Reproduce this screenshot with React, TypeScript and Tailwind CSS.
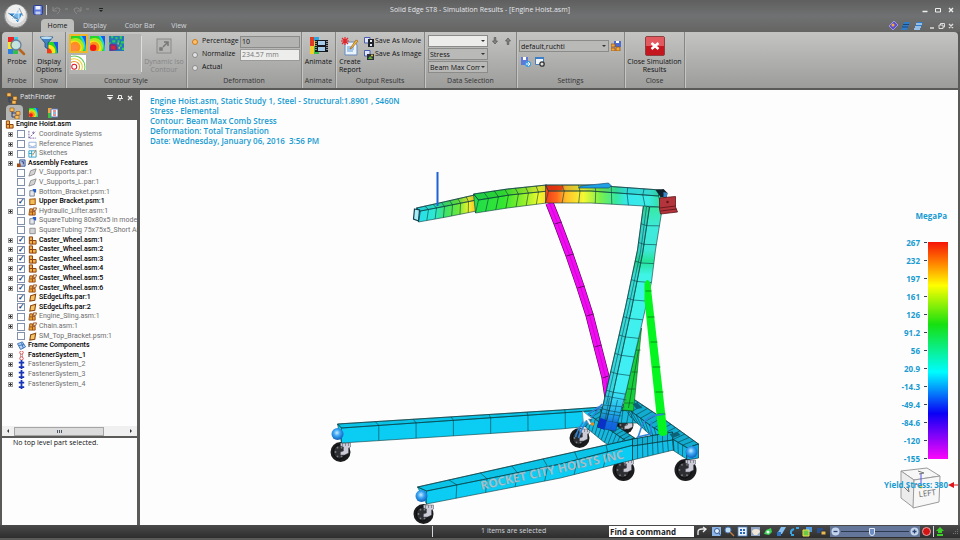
import { useState, type ReactNode } from "react";
import clsx from "clsx";

type Point = [number, number];

const toPoints = (pts: Point[]) => pts.map((p) => p.join(",")).join(" ");

// Position at t (0..1) along a polyline
function along(line: Point[], t: number): Point {
  const lens = line.slice(1).map((p, i) => Math.hypot(p[0] - line[i][0], p[1] - line[i][1]));
  let left = t * lens.reduce((a, b) => a + b, 0);
  for (let i = 0; i < lens.length; i++) {
    if (left <= lens[i] || i === lens.length - 1) {
      const k = left / lens[i];
      return [
        line[i][0] + (line[i + 1][0] - line[i][0]) * k,
        line[i][1] + (line[i + 1][1] - line[i][1]) * k,
      ];
    }
    left -= lens[i];
  }
  return line[0];
}

interface BeamProps {
  top: Point[];
  ridge: Point[];
  bottom: Point[];
  fill: string;
  count: number;
  shade?: number;
}

// One meshed beam: two visible faces split by a ridge, with element lines
function Beam({ top, ridge, bottom, fill, count, shade = 0.1 }: BeamProps) {
  const steps = Array.from({ length: count + 1 }, (_, i) => i / count);
  return (
    <g stroke="#0b3b40" strokeWidth="0.6" strokeLinejoin="round">
      <polygon points={toPoints([...top, ...[...bottom].reverse()])} fill={fill} />
      <polygon points={toPoints([...top, ...[...ridge].reverse()])} fill="#003a30" fillOpacity={shade} />
      <polyline points={toPoints(ridge)} fill="none" />
      {steps.map((t) => (
        <polyline key={t} points={toPoints([along(top, t), along(ridge, t), along(bottom, t)])} fill="none" />
      ))}
    </g>
  );
}

function Caster({ x, y, r = 10 }: { x: number; y: number; r?: number }) {
  return (
    <g>
      <ellipse cx={x} cy={y} rx={r} ry={r} fill="#1b1c1e" />
      <ellipse cx={x - 1} cy={y} rx={r - 4} ry={r - 3} fill="#2c2e31" stroke="#0c0c0d" />
      {[0, 60, 120, 180, 240, 300].map((a) => (
        <circle
          key={a}
          cx={x - 1 + Math.cos((a * Math.PI) / 180) * (r - 6)}
          cy={y + Math.sin((a * Math.PI) / 180) * (r - 5)}
          r="0.9"
          fill="#7b7e83"
        />
      ))}
      <path
        d={`M${x} ${y - r + 1}h10v4l-2 1v5l-4 2l-4 0v-3l3 -1v-4l-3 -1z`}
        fill="#cbccd8"
        stroke="#55565f"
        strokeWidth="0.5"
      />
      <path d={`M${x + 2} ${y - r + 1}v3M${x + 5} ${y - r + 1}v3M${x + 8} ${y - r + 1}v3`} stroke="#6e707c" strokeWidth="0.7" />
    </g>
  );
}

const ramPath = "M549 203L557 223L569 255L580 287L589 315L597 346L605 377L608 397";

function HoistScene() {
  return (
    <svg
      viewBox="140 90 817 435"
      preserveAspectRatio="xMidYMax meet"
      className="absolute inset-0 h-full w-full"
      role="img"
      aria-label="Engine hoist stress plot"
    >
      <defs>
        <linearGradient id="tip" gradientUnits="userSpaceOnUse" x1="414" y1="0" x2="476" y2="0">
          <stop offset="0" stopColor="#27dcf5" />
          <stop offset="0.32" stopColor="#2de8d0" />
          <stop offset="0.5" stopColor="#3ee26a" />
          <stop offset="0.7" stopColor="#68e83c" />
          <stop offset="0.88" stopColor="#f1f32f" />
          <stop offset="1" stopColor="#ffb52a" />
        </linearGradient>
        <linearGradient id="sleeve" gradientUnits="userSpaceOnUse" x1="474" y1="0" x2="547" y2="0">
          <stop offset="0" stopColor="#1fdc4c" />
          <stop offset="0.4" stopColor="#35e62f" />
          <stop offset="0.7" stopColor="#9cf02c" />
          <stop offset="0.88" stopColor="#eef92e" />
          <stop offset="1" stopColor="#ffd829" />
        </linearGradient>
        <linearGradient id="boom" gradientUnits="userSpaceOnUse" x1="546" y1="0" x2="662" y2="0">
          <stop offset="0" stopColor="#f0401c" />
          <stop offset="0.09" stopColor="#ff6b1c" />
          <stop offset="0.17" stopColor="#ffc02a" />
          <stop offset="0.32" stopColor="#f4f934" />
          <stop offset="0.46" stopColor="#7cf04a" />
          <stop offset="0.6" stopColor="#37e8a0" />
          <stop offset="0.7" stopColor="#35e8ef" />
          <stop offset="0.88" stopColor="#3cebe4" />
          <stop offset="1" stopColor="#30de92" />
        </linearGradient>
        <linearGradient id="post" gradientUnits="userSpaceOnUse" x1="0" y1="205" x2="0" y2="430">
          <stop offset="0" stopColor="#35ea9c" />
          <stop offset="0.1" stopColor="#3fe9dc" />
          <stop offset="0.2" stopColor="#3ee9d8" />
          <stop offset="0.25" stopColor="#25e396" />
          <stop offset="0.31" stopColor="#3ff3e6" />
          <stop offset="0.82" stopColor="#40edf7" />
          <stop offset="0.92" stopColor="#24b4ee" />
          <stop offset="1" stopColor="#0b46d2" />
        </linearGradient>
        <radialGradient id="cap" cx="0.45" cy="0.4" r="0.6">
          <stop offset="0" stopColor="#c8ecff" />
          <stop offset="0.45" stopColor="#3ba6f2" />
          <stop offset="1" stopColor="#0f60bd" />
        </radialGradient>
      </defs>

      {/* Rear casters */}
      <Caster x={624} y={425} r={9} />
      <Caster x={579} y={438} />
      <Caster x={340} y={452} />

      {/* Base frame */}
      <Beam
        top={[[337, 424], [560, 410], [602, 407]]}
        ridge={[[341, 428], [560, 413], [602, 410]]}
        bottom={[[341, 443], [560, 429], [602, 425]]}
        fill="#0bcdf3"
        count={7}
        shade={0.06}
      />
      <Beam
        top={[[610, 408], [641, 407]]}
        ridge={[[610, 411], [641, 410]]}
        bottom={[[610, 423], [637, 423]]}
        fill="#18b9df"
        count={5}
      />
      <Beam
        top={[[633, 399], [666, 421], [698, 444]]}
        ridge={[[622, 405], [652, 427], [687, 448]]}
        bottom={[[631, 418], [652, 437], [686, 459]]}
        fill="#14b9e2"
        count={14}
      />
      <polygon points="687,448 698,444 698,458 686,460" fill="#0ba9e0" stroke="#0b3b40" strokeWidth="0.7" />
      <Beam
        top={[[598, 408], [615, 425], [637, 440]]}
        ridge={[[588, 414], [608, 429], [630, 444]]}
        bottom={[[585, 427], [602, 441], [624, 456]]}
        fill="#16b8e0"
        count={12}
      />
      <Caster x={623} y={470} r={11} />
      <Caster x={685} y={470} r={11} />
      <Beam
        top={[[417, 487], [560, 455], [637, 438]]}
        ridge={[[426, 491], [560, 464], [637, 444]]}
        bottom={[[426, 504], [560, 478], [632, 460]]}
        fill="#0bcdf3"
        count={7}
        shade={0.06}
      />
      <Beam
        top={[[632, 439], [672, 432]]}
        ridge={[[632, 446], [672, 440]]}
        bottom={[[632, 460], [673, 450]]}
        fill="#12bfe8"
        count={8}
      />
      <circle cx="337" cy="434" r="6" fill="url(#cap)" />
      <circle cx="421" cy="496" r="6" fill="url(#cap)" />
      <circle cx="691" cy="452" r="6" fill="url(#cap)" />
      <Caster x={423} y={514} />
      <text
        transform="translate(481 490) rotate(-12.5)"
        fontFamily="'Open Sans', sans-serif"
        fontSize="12"
        fontWeight="700"
        fill="#a9c3cd"
        stroke="#5e8b99"
        strokeWidth="0.2"
      >
        ROCKET CITY HOISTS INC
      </text>

      {/* Rear brace */}
      <polygon points="641,328 633,411 622,410 628,380" fill="#17cf3e" stroke="#0b5b20" strokeWidth="0.6" />
      <path d="M638 350L628 408M634 350h6M631 372h6M627 389h8M624 403h9" stroke="#0b5b20" strokeWidth="0.7" fill="none" />

      {/* Ram */}
      <path d={ramPath} stroke="#4c0a4e" strokeWidth="8.400" strokeLinejoin="round" fill="none" />
      <path d={ramPath} stroke="#f20af2" strokeWidth="7.200" strokeLinejoin="round" fill="none" />
      <path d={ramPath} stroke="#b00ab6" strokeWidth="0.6" fill="none" />
      <path
        d="M554 224l7 -2M566 256l7 -2M577 288l7 -2M586 316l7 -2M594 347l7 -2M602 378l6 -2"
        stroke="#4c0a4e"
        strokeWidth="0.8"
      />

      {/* Post */}
      <Beam
        top={[[643, 205], [637, 250], [625, 307], [603, 403], [597, 427]]}
        ridge={[[649, 207], [642, 254], [631, 309], [610, 405], [604, 429]]}
        bottom={[[662, 207], [655, 250], [651, 282], [640, 330], [626, 390], [615, 431]]}
        fill="url(#post)"
        count={12}
        shade={0.12}
      />
      <path
        d="M646 207L640 252L628 308L606 404M605 396L626 400M603 405l21 2M601 413l20 3M599 420l20 3M609 398l-6 30M617 400l-7 30"
        stroke="#0b4b60"
        strokeWidth="0.6"
        fill="none"
      />
      <path d="M597 427L600 418L606 420L604 430Z" fill="#0b30c8" />
      <path d="M606 421l11 2l-2 8l-11 -2z" fill="#1169e6" fillOpacity="0.7" />

      {/* Front brace */}
      <path d="M644 284Q647 276 650 284L667 434Q662 438 658 434L644 300Z" fill="#04f51f" />
      <path d="M645 291h6M647 317h7M650 342h7M652 367h8M655 392h8M657 414h8" stroke="#067a16" strokeWidth="0.8" />

      {/* Lifting hooks */}
      <g fill="none" stroke="#2f86da" strokeWidth="1.600">
        <path d="M575 437C577 428 582 424 586 417S598 409 602 404" />
        <path d="M578 438C582 422 592 418 600 407" />
        <path d="M637 438C641 430 640 423 648 418S658 416 663 414" />
        <path d="M637 437L650 434L651 421" />
      </g>
      <path d="M632 404l5 -1l5 5l-6 1zM669 434l8 -2l3 3l-8 3z" fill="#0c6276" />

      {/* Boom */}
      <Beam
        top={[[416, 208], [443, 202], [474, 195]]}
        ridge={[[420, 211], [446, 206], [476, 200]]}
        bottom={[[418, 222], [446, 217], [476, 211]]}
        fill="url(#tip)"
        count={7}
      />
      <path d="M414 209l5 1l-1 11l-5 -2z" fill="#a9ecf5" stroke="#123f4d" strokeWidth="1.200" />
      <Beam
        top={[[473, 194], [507, 189], [546, 185]]}
        ridge={[[478, 200], [509, 195], [548, 191]]}
        bottom={[[475, 213], [507, 208], [546, 203]]}
        fill="url(#sleeve)"
        count={7}
      />
      <Beam
        top={[[545, 185], [590, 185], [660, 190]]}
        ridge={[[548, 191], [590, 191], [658, 196]]}
        bottom={[[545, 203], [590, 203], [661, 207]]}
        fill="url(#boom)"
        count={7}
      />
      <polygon points="580,186 608,183 611,186 608,188 578,188" fill="#1f9fe4" stroke="#0b3b60" strokeWidth="0.6" />
      <path d="M546 186L563 186L562 190L549 190Z" fill="#e0240c" fillOpacity="0.7" />
      <path d="M655 190l8 -1l4 4l-1 5l-6 -1z" fill="#12222c" />
      <path d="M663 192l4 1l-1 5l-3 -1z" fill="#3787c8" />
      <path d="M659 198L675 196.500L675 207L677 212L660 214L659 209Z" fill="#b3343b" stroke="#5b1418" strokeWidth="0.8" />
      <path d="M659 208L675 206M660 211l16 -2" stroke="#5b1418" strokeWidth="0.8" />
      <circle cx="667" cy="202" r="1.2" fill="#5b1418" />
      <rect x="436" y="172" width="2" height="34" fill="#1f63d6" />

      {/* Pointer */}
      <path d="M582 411l1 12l3 -3l3 5l2 -1l-3 -5h4z" fill="#fff" stroke="#6e7c86" strokeWidth="0.5" />
      <circle cx="592" cy="424" r="1.8" fill="#e88a1c" />
    </svg>
  );
}

const stressLevels = [
  "267", "232", "197", "161", "126", "91.2", "56", "20.9", "-14.3", "-49.4", "-84.6", "-120", "-155",
];

function StressLegend() {
  return (
    <div className="relative flex w-20 flex-col text-[8px] leading-3 font-bold text-[#179bd1]">
      <div className="pr-[11px] text-right">MegaPa</div>
      <div className="mt-5 flex justify-end gap-px pr-[10px]">
        <ul className="-my-1 flex flex-col justify-between text-right">
          {stressLevels.map((level) => (
            <li key={level} className="flex h-[9px] items-center justify-end gap-1 leading-[9px]">
              {level}
              <span className="h-px w-[3px] bg-gray-700" />
            </li>
          ))}
        </ul>
        <div className="h-[217px] w-5 bg-[linear-gradient(#f51408,#ff7a00_9%,#ffff00_20%,#16e010_38%,#00fcff_60%,#0a00f5_79%,#fb06fb)]" />
      </div>
      <svg viewBox="0 0 46 46" className="absolute right-[15px] bottom-[-18px] w-[46px]" aria-hidden="true">
        <path d="M4 8L30 5L43 13L17 17Z" fill="#f7f7f7" stroke="#9b9b9b" />
        <path d="M4 8L17 17V45L4 35Z" fill="#ececec" stroke="#9b9b9b" />
        <path d="M17 17L43 13L42 39L16 45Z" fill="#f7f7f7" stroke="#9b9b9b" />
        <path d="M24 10V24" stroke="#5555ee" />
        <path d="M19 21L24 24" stroke="#e55" />
        <circle cx="24" cy="24" r="1.500" fill="#e8d030" />
        <path d="M7 24l5 5l-1 -6M21 8l6 2l-5 1" stroke="#777" fill="none" />
        <text x="22" y="34" transform="rotate(-7 22 34)" fontSize="8" fontWeight="400" fill="#666">
          LEFT
        </text>
      </svg>
      <div className="relative mt-5 flex items-center justify-end whitespace-nowrap">
        Yield Stress: 380
        <svg viewBox="0 0 10 6" className="h-1.5 w-2.5 shrink-0">
          <path d="M0 3L6 0V2.500H10V3.500H6V6Z" fill="#e0141a" />
        </svg>
      </div>
    </div>
  );
}

type Glyph =
  | "axes"
  | "plane"
  | "sketch"
  | "features"
  | "ghost"
  | "linked"
  | "part"
  | "partAlt"
  | "grayPart"
  | "asm"
  | "asmAlt"
  | "frame"
  | "bolt"
  | "boltBlue";

function TreeGlyph({ kind }: { kind: Glyph }) {
  return (
    <svg viewBox="0 0 10 10" className="h-[9px] w-[9px] shrink-0" aria-hidden="true">
      {kind === "axes" && (
        <g stroke="#6b4a94" strokeWidth="0.9" fill="none">
          <path d="M1 1V9H9M1 9L8 2" strokeDasharray="2 1" />
          <circle cx="6" cy="3" r="0.8" />
        </g>
      )}
      {kind === "plane" && <path d="M1 2.500H9V8.500H1ZM1 6Q5 9 9 6" fill="#fff" stroke="#8eafd8" />}
      {kind === "sketch" && (
        <g fill="none" stroke="#2b9fc4">
          <path d="M1 2H9V9H1ZM4 2V9M1 5H5" />
          <path d="M5 7L9 1" stroke="#ad7a3a" />
        </g>
      )}
      {kind === "features" && (
        <g>
          <path d="M3 1H9V8H3Z" fill="#b9c8e8" stroke="#30508f" />
          <path d="M0 5H4V9H0Z" fill="#a34b10" />
          <path d="M5 3H7V6" stroke="#1d2d66" fill="none" />
        </g>
      )}
      {(kind === "ghost" || kind === "grayPart") && (
        <path d={kind === "ghost" ? "M3 3L9 1L7 7L1 9Z" : "M2 2.500H8V8.500H2Z"} fill="#d3d3d3" stroke="#8a8a8a" />
      )}
      {kind === "linked" && (
        <g>
          <path d="M2 3H7V9H2Z" fill="#e3e6ea" stroke="#74808e" />
          <path d="M5 1H9V5Q6 5 5 1Z" fill="#2b5fc6" />
        </g>
      )}
      {kind === "part" && <path d="M2 2.500L8 2V8L2 8.500Z" fill="#f3bd55" stroke="#a55a13" strokeWidth="1.200" />}
      {kind === "partAlt" && <path d="M3 3L8.500 1.500L7.500 8L2 9Z" fill="#f5c566" stroke="#8a4710" strokeWidth="1.200" />}
      {kind === "asm" && (
        <g fill="#f0b04a" stroke="#8f4310" strokeWidth="1.100">
          <path d="M1.500 1H5V5H9V9H1.500Z" />
          <path d="M1.500 5H5V9" fill="none" />
        </g>
      )}
      {kind === "asmAlt" && (
        <g fill="#e8a33b" stroke="#8f4310" strokeWidth="0.9">
          <path d="M2 2H5V5H8V9H1Z" />
          <path d="M2 5.500H5V9" fill="none" />
          <path d="M6 1L9.500 1L8.500 4L6 4Z" fill="#f7e3c0" />
        </g>
      )}
      {kind === "frame" && (
        <g fill="#b5d3f5" stroke="#2a62ad" strokeWidth="0.9">
          <path d="M0.500 3L6 1L9.500 6.500L4 9.500Z" />
          <path d="M2 5L8 4M5 2L7 8" fill="none" />
        </g>
      )}
      {kind === "bolt" && (
        <g fill="#fff" stroke="#d04747">
          <path d="M4 2H6V8H4Z" stroke="#9b6b6b" strokeWidth="0.700" />
          <circle cx="5" cy="1.700" r="1.900" />
          <circle cx="5" cy="8.300" r="1.900" />
        </g>
      )}
      {kind === "boltBlue" && <path d="M4 0H6V10H4ZM2 2H8V4H2ZM2 7H8V9H2Z" fill="#1936b8" />}
    </svg>
  );
}

interface TreeNode {
  label: string;
  glyph: Glyph;
  check?: boolean;
  expand?: boolean;
  dim?: boolean;
}

const treeNodes: TreeNode[] = [
  { label: "Coordinate Systems", glyph: "axes", check: false, expand: true, dim: true },
  { label: "Reference Planes", glyph: "plane", check: false, expand: true, dim: true },
  { label: "Sketches", glyph: "sketch", check: false, expand: true, dim: true },
  { label: "Assembly Features", glyph: "features", expand: true },
  { label: "V_Supports.par:1", glyph: "ghost", check: false, dim: true },
  { label: "V_Supports_L.par:1", glyph: "ghost", check: false, dim: true },
  { label: "Bottom_Bracket.psm:1", glyph: "linked", check: false, dim: true },
  { label: "Upper Bracket.psm:1", glyph: "part", check: true },
  { label: "Hydraulic_Lifter.asm:1", glyph: "asmAlt", check: false, expand: true, dim: true },
  { label: "SquareTubing 80x80x5 in model", glyph: "linked", check: false, dim: true },
  { label: "SquareTubing 75x75x5_Short Ar", glyph: "grayPart", check: false, dim: true },
  { label: "Caster_Wheel.asm:1", glyph: "asm", check: true, expand: true },
  { label: "Caster_Wheel.asm:2", glyph: "asm", check: true, expand: true },
  { label: "Caster_Wheel.asm:3", glyph: "asm", check: true, expand: true },
  { label: "Caster_Wheel.asm:4", glyph: "asm", check: true, expand: true },
  { label: "Caster_Wheel.asm:5", glyph: "asmAlt", check: true, expand: true },
  { label: "Caster_Wheel.asm:6", glyph: "asmAlt", check: true, expand: true },
  { label: "SEdgeLifts.par:1", glyph: "partAlt", check: true },
  { label: "SEdgeLifts.par:2", glyph: "partAlt", check: true },
  { label: "Engine_Sling.asm:1", glyph: "asmAlt", check: false, expand: true, dim: true },
  { label: "Chain.asm:1", glyph: "asmAlt", check: false, expand: true, dim: true },
  { label: "SM_Top_Bracket.psm:1", glyph: "partAlt", check: false, dim: true },
  { label: "Frame Components", glyph: "frame", expand: true },
  { label: "FastenerSystem_1", glyph: "bolt", expand: true },
  { label: "FastenerSystem_2", glyph: "boltBlue", expand: true, dim: true },
  { label: "FastenerSystem_3", glyph: "boltBlue", expand: true, dim: true },
  { label: "FastenerSystem_4", glyph: "boltBlue", expand: true, dim: true },
];

function TreeRow({ node }: { node: TreeNode }) {
  return (
    <li
      className={clsx(
        "flex items-center pl-[6px] whitespace-nowrap",
        node.dim ? "text-[#6f6f6f]" : "font-medium text-black",
      )}
    >
      {node.expand ? (
        <button
          aria-label={`Expand ${node.label}`}
          className="mr-1 flex h-[5px] w-[5px] shrink-0 items-center justify-center border border-[#9a9a9a] bg-[#ececec]"
        >
          <svg viewBox="0 0 3 3" className="h-[3px] w-[3px] shrink-0">
            <path d="M0 1H1V0H2V1H3V2H2V3H1V2H0Z" fill="#333" />
          </svg>
        </button>
      ) : (
        <span className="mr-1 w-[5px] shrink-0" />
      )}
      <label className="flex items-center gap-[2px]">
        {node.check !== undefined && (
          <input
            type="checkbox"
            defaultChecked={node.check}
            className="mr-px flex h-2 w-2 shrink-0 appearance-none items-center justify-center border border-[#8191ab] bg-white text-[8px] leading-none font-bold text-[#1d3f7d] checked:after:content-['✓']"
          />
        )}
        <TreeGlyph kind={node.glyph} />
        {node.label}
      </label>
    </li>
  );
}

function AsmLogo({ className }: { className: string }) {
  return (
    <svg viewBox="0 0 12 12" className={className} aria-hidden="true">
      <path d="M3 4V10H8M3 6H8" stroke="#2f3f66" fill="none" />
      <path d="M1 1H5V4.500H1ZM7 4.500H11V8H7ZM6 8.500H10V12H6Z" fill="#f7bd5a" stroke="#8f5312" strokeWidth="0.6" />
    </svg>
  );
}

function HeatIcon({ className, center = "#f01818" }: { className: string; center?: string }) {
  return (
    <svg viewBox="0 0 14 14" className={className} aria-hidden="true">
      <rect width="14" height="14" fill="#1857e8" />
      <path d="M0 0H10Q14 5 14 14H0Z" fill="#1cd6e8" />
      <path d="M0 0H8Q12 6 13 14H0Z" fill="#25d528" />
      <path d="M0 3A8 8 0 0 1 11 14H0Z" fill="#a8ea22" />
      <path d="M0 5A7 7 0 0 1 9.500 14H0Z" fill="#fbe21c" />
      <path d="M0 7A5 5 0 0 1 7.500 14H0Z" fill="#ff8f1c" />
      <circle cx="3" cy="11" r="3" fill={center} />
    </svg>
  );
}

function PathFinder() {
  return (
    <aside className="flex w-[135px] shrink-0 flex-col">
      <div className="flex h-[15px] shrink-0 items-center gap-[2px] px-1 text-[7px] text-gray-200">
        <AsmLogo className="h-3 w-3" />
        <h2 className="flex-1">PathFinder</h2>
        <div className="flex items-center gap-1">
          <button aria-label="Options">
            <svg viewBox="0 0 6 6" className="h-[6px] w-[6px]">
              <path d="M0 0H6V1H0ZM0 2H6L3 5Z" fill="#eee" />
            </svg>
          </button>
          <button aria-label="Pin">
            <svg viewBox="0 0 6 6" className="h-[6px] w-[6px]">
              <path d="M1.500 0.500H4.500V3.500H1.500ZM0 3.500H6M3 3.500V6" fill="none" stroke="#eee" />
            </svg>
          </button>
          <button aria-label="Close panel">
            <svg viewBox="0 0 6 6" className="h-[6px] w-[6px]">
              <path d="M1 1L5 5M5 1L1 5" stroke="#eee" strokeWidth="1.200" />
            </svg>
          </button>
        </div>
      </div>
      <div className="flex h-[15px] shrink-0 items-center px-1">
        <button aria-label="Assembly" className="flex h-full w-[17px] items-center justify-center rounded-t-sm bg-[#b5b5b4]">
          <AsmLogo className="h-3 w-3" />
        </button>
        <button aria-label="Results" className="flex w-5 justify-center">
          <HeatIcon className="h-[9px] w-[9px]" />
        </button>
        <button aria-label="Report" className="flex w-5 justify-center">
          <svg viewBox="0 0 10 10" className="h-[10px] w-[10px]">
            <path d="M0 0H4V10H0Z" fill="#f2a33c" />
            <path d="M0 5H4V10H0Z" fill="#3bc03f" />
            <path d="M3 1H10V9H3Z" fill="#fff" stroke="#5c74b8" />
            <path d="M5 3H8M5 7H8" stroke="#c22" />
            <path d="M5 5H8" stroke="#26a" />
          </svg>
        </button>
      </div>
      <div className="min-h-0 flex-1 overflow-hidden bg-[#fdfdfd] font-['Roboto','Open_Sans',sans-serif] text-[7px] leading-[9px]">
        <ul className="grid h-[269px] auto-rows-fr">
          <li className="flex items-center gap-[2px] pl-[3px] font-medium whitespace-nowrap text-black">
            <TreeGlyph kind="asm" />
            Engine Hoist.asm
          </li>
          {treeNodes.map((node) => (
            <TreeRow key={node.label} node={node} />
          ))}
        </ul>
      </div>
      <div className="flex h-[10px] shrink-0 items-center bg-[#f0f0f0] px-1">
        <svg viewBox="0 0 4 4" className="h-1 w-1">
          <path d="M3 0L1 2L3 4Z" fill="#333" />
        </svg>
        <div className="ml-1 flex h-[9px] w-[90px] items-center justify-center gap-px border border-[#a5a5a5] bg-[#dcdcdc]">
          <span className="h-[3px] w-px bg-gray-600" />
          <span className="h-[3px] w-px bg-gray-600" />
          <span className="h-[3px] w-px bg-gray-600" />
        </div>
        <svg viewBox="0 0 4 4" className="ml-auto h-1 w-1">
          <path d="M1 0L3 2L1 4Z" fill="#333" />
        </svg>
      </div>
      <p className="mt-[2px] h-[87px] shrink-0 bg-[#fdfdfd] px-[11px] text-[7px] leading-[9px] text-[#111]">
        No top level part selected.
      </p>
    </aside>
  );
}

function RibbonGroup({ title, className, children }: { title: string; className: string; children: ReactNode }) {
  return (
    <section className={clsx("flex shrink-0 flex-col border-r border-[#858584] shadow-[1px_0_0_#c5c5c4]", className)}>
      <div className="flex flex-1">{children}</div>
      <h3 className="h-[12px] text-center text-[7px] leading-[10px] text-[#333]">{title}</h3>
    </section>
  );
}

function BigButton({ label, children, disabled }: { label: string; children: ReactNode; disabled?: boolean }) {
  return (
    <button
      disabled={disabled}
      className={clsx(
        "flex w-full flex-col items-center pt-1 text-center text-[7px] leading-[8px]",
        disabled ? "text-[#858585]" : "text-[#111]",
      )}
    >
      <span className="mb-[2px] flex h-5 items-center">{children}</span>
      <span className="whitespace-pre">{label}</span>
    </button>
  );
}

function Dropdown({ label, options, className }: { label: string; options: string[]; className?: string }) {
  return (
    <span className={clsx("relative flex h-3 border border-[#8b8b8a]", className)}>
      <select
        aria-label={label}
        className="w-full appearance-none overflow-hidden pr-[7px] pl-px text-[7px] leading-[9px] text-clip text-[#111]"
      >
        {options.map((o) => (
          <option key={o}>{o}</option>
        ))}
      </select>
      <svg viewBox="0 0 4 4" className="pointer-events-none absolute top-[3px] right-[2px] h-1 w-1">
        <path d="M0 1H4L2 3Z" fill="#333" />
      </svg>
    </span>
  );
}

function FloppyIcon({ className }: { className: string }) {
  return (
    <svg viewBox="0 0 10 10" className={className} aria-hidden="true">
      <rect x="0.500" y="0.500" width="9" height="9" rx="1" fill="#5d78d8" stroke="#2c3f94" />
      <path d="M2.500 1H7.500V4.500H2.500Z" fill="#eef2ff" />
      <path d="M2.500 6.500H7.500V9.500H2.500Z" fill="#c3cdf0" />
    </svg>
  );
}

function Ribbon() {
  const [mode, setMode] = useState("Percentage");
  return (
    <div className="mx-[2px] flex h-14 shrink-0 overflow-hidden rounded-t-sm bg-linear-to-b from-[#c4c4c3] to-[#9c9c9b]">
      <RibbonGroup title="Probe" className="w-[31px]">
        <BigButton label="Probe">
          <svg viewBox="0 0 18 20" className="h-5 w-[18px]">
            <path d="M0 1H10V18H0Z" fill="#f7e22d" />
            <path d="M0 1H6V6H0Z" fill="#e22" />
            <path d="M6 1H10V6H6Z" fill="#36cbe8" />
            <path d="M0 13H5V18H0Z" fill="#2f7fe0" />
            <path d="M5 12H10V18H5Z" fill="#35bf48" />
            <path d="M11 13L16 18" stroke="#b5651c" strokeWidth="2.500" strokeLinecap="round" />
            <circle cx="8" cy="9" r="5" fill="#bfe3f7" fillOpacity="0.85" stroke="#6b7f93" strokeWidth="1.300" />
          </svg>
        </BigButton>
      </RibbonGroup>
      <RibbonGroup title="Show" className="w-[33px]">
        <BigButton label={"Display\nOptions"}>
          <svg viewBox="0 0 18 20" className="h-5 w-[18px]">
            <g transform="translate(7 6) scale(0.8)">
              <rect width="14" height="14" fill="#1857e8" />
              <path d="M0 0H8Q12 6 13 14H0Z" fill="#25d528" />
              <path d="M0 4A8 8 0 0 1 10 14H0Z" fill="#fbe21c" />
              <path d="M0 8A5 5 0 0 1 6 14H0Z" fill="#f23a18" />
            </g>
            <path d="M0 1H13L8 7V13L5 11V7Z" fill="#3e84c2" stroke="#1e4a7c" strokeWidth="0.8" />
            <ellipse cx="6.500" cy="1.800" rx="6" ry="1.300" fill="#b9def4" />
          </svg>
        </BigButton>
      </RibbonGroup>
      <RibbonGroup title="Contour Style" className="w-[121px]">
        <div className="mt-[2px] mb-[2px] ml-[3px] flex w-[72px] shrink-0 flex-wrap content-start bg-[#b3b3b2]">
          <button aria-label="Smooth" className="flex h-[19px] w-[19px] items-center justify-center border-2 border-[#edb72b]">
            <HeatIcon className="h-[15px] w-[15px]" center="#ff8a40" />
          </button>
          <button aria-label="Banded" className="flex h-[19px] w-[19px] items-center justify-center">
            <HeatIcon className="h-[15px] w-[15px]" />
          </button>
          <button aria-label="Element" className="flex h-[19px] w-[19px] items-center justify-center">
            <svg viewBox="0 0 14 14" className="h-[15px] w-[15px]">
              <rect width="14" height="14" fill="#2176bd" />
              <path
                d="M2 0h2v2h-2zM6 1h2v2h-2zM10 0h2v3h-2zM3 4h3v2h-3zM8 4h2v2h-2zM11 5h3v2h-3zM0 6h2v2H0zM10 8h2v2h-2zM12 11h2v2h-2z"
                fill="#2fcb55"
              />
              <path d="M1 7l6 1l1 5l-7 1z" fill="#7a2c86" />
              <path d="M2 9l4 0l0 4l-4 -1z" fill="#d3283a" />
              <path d="M8 6h1v2h-1zM9 10h1v2h-1z" fill="#e6e32b" />
            </svg>
          </button>
          <button aria-label="Lines" className="flex h-[19px] w-[19px] items-center justify-center">
            <svg viewBox="0 0 14 14" className="h-[15px] w-[15px]">
              <rect width="14" height="14" fill="#fff" />
              <g fill="none">
                <circle cx="3" cy="11" r="2.300" stroke="#e01c2c" />
                <circle cx="3" cy="11" r="5" stroke="#f0922c" />
                <circle cx="3" cy="11" r="7.500" stroke="#e9d22c" />
                <circle cx="3" cy="11" r="10" stroke="#6acb5c" />
              </g>
            </svg>
          </button>
        </div>
        <div className="my-1 w-px shrink-0 bg-[#dededd]" />
        <BigButton label={"Dynamic Iso\nContour"} disabled>
          <svg viewBox="0 0 16 16" className="h-4 w-4">
            <rect x="1" y="1" width="14" height="14" fill="#b5b5b4" stroke="#8a8a89" />
            <path d="M4 10H6V12H4ZM7 9L11 5M8 4H12V8" stroke="#777" strokeWidth="1.500" fill="none" />
          </svg>
        </BigButton>
      </RibbonGroup>
      <RibbonGroup title="Deformation" className="w-[115px]">
        <div className="flex flex-1 flex-col pt-[3px] pl-[5px] text-[7px] text-[#111]">
          {["Percentage", "Normalize", "Actual"].map((name) => (
            <div key={name} className="flex h-[13px] items-center">
              <label className="flex w-[48px] items-center gap-1">
                <input
                  type="radio"
                  name="deformation"
                  checked={mode === name}
                  onChange={() => setMode(name)}
                  className="h-[6px] w-[6px] shrink-0 appearance-none rounded-full border border-[#8a8a8a] bg-[#e2e2e2] checked:border-[#c97a1e] checked:bg-[#ffc069]"
                />
                {name}
              </label>
              {name === "Percentage" && (
                <input
                  aria-label="Percentage value"
                  defaultValue="10"
                  className="h-3 w-[60px] border border-[#8b8b8a] bg-[#b3b3b2] px-px"
                />
              )}
              {name === "Normalize" && (
                <input
                  aria-label="Normalize value"
                  defaultValue="234.57 mm"
                  className="h-3 w-[60px] border border-[#9a9a9a] bg-[#ededec] px-px text-[#777]"
                />
              )}
            </div>
          ))}
        </div>
      </RibbonGroup>
      <RibbonGroup title="Animate" className="w-[34px]">
        <BigButton label="Animate">
          <svg viewBox="0 0 18 20" className="h-5 w-[18px]">
            <path d="M0 1H9V18H0Z" fill="#f3cf2b" />
            <path d="M0 1H4V10H0Z" fill="#df3a22" />
            <path d="M4 10H9V18H4Z" fill="#35bf48" />
            <path d="M4 1H9V5H4Z" fill="#2da6e0" />
            <path d="M5 4H18V16H5Z" fill="#15181c" />
            <path d="M8 5H15V9H8ZM8 11H15V15H8Z" fill="#a5cbe8" />
            <path d="M6 5v10M17 5v10" stroke="#fff" strokeDasharray="1 1" />
          </svg>
        </BigButton>
      </RibbonGroup>
      <RibbonGroup title="Output Results" className="w-[89px]">
        <div className="w-[28px] shrink-0">
          <BigButton label={"Create\nReport"}>
            <svg viewBox="0 0 18 20" className="h-5 w-[18px]">
              <path d="M4 6H14L16 9V19H4Z" fill="#eaf2fb" stroke="#6788b8" />
              <path d="M6 11h7M6 13h7M6 15h6" stroke="#5b9bd8" />
              <path d="M17 5L11 12L9 13L10 11L15 4Z" fill="#f2bb3a" stroke="#a0611a" strokeWidth="0.7" />
              <path d="M4 1V9M0 5H8M1 2L7 8M7 2L1 8" stroke="#e4262b" strokeWidth="1.200" />
            </svg>
          </BigButton>
        </div>
        <div className="flex flex-col pt-[3px] text-[7px] whitespace-nowrap text-[#111]">
          <button className="flex h-[13px] items-center gap-px">
            <svg viewBox="0 0 10 10" className="h-[10px] w-[10px]">
              <path d="M0.500 0.500H6V6H0.500Z" fill="#dfe5f7" stroke="#4a5cae" />
              <path d="M4 2H10V10H4Z" fill="#20252c" />
              <path d="M6 3H8V5H6ZM6 7H8V9H6Z" fill="#e3edf5" />
            </svg>
            Save As Movie
          </button>
          <button className="flex h-[13px] items-center gap-px">
            <svg viewBox="0 0 10 10" className="h-[10px] w-[10px]">
              <path d="M0.500 0.500H6V6H0.500Z" fill="#dfe5f7" stroke="#4a5cae" />
              <path d="M3 4H10V10H3Z" fill="#2b3038" />
              <path d="M4 9L6 6L9 9Z" fill="#5fae3c" />
              <circle cx="8" cy="5.500" r="1" fill="#f3cf2b" />
            </svg>
            Save As Image
          </button>
        </div>
      </RibbonGroup>
      <RibbonGroup title="Data Selection" className="w-[92px]">
        <div className="flex w-[63px] flex-col gap-px pt-[3px] pl-[3px]">
          <Dropdown label="Result set" options={[""]} className="bg-[#ececeb]" />
          <Dropdown label="Result type" options={["Stress"]} className="bg-[#b9b9b8]" />
          <Dropdown label="Component" options={["Beam Max Comb"]} className="bg-[#b9b9b8]" />
        </div>
        <div className="flex gap-[7px] pt-[5px] pl-1">
          <button aria-label="Next result" className="h-2">
            <svg viewBox="0 0 6 8" className="h-2 w-[6px]">
              <path d="M2.200 0.500H3.800V4H5.500L3 7L0.500 4H2.200Z" fill="#888" stroke="#444" strokeWidth="0.600" />
            </svg>
          </button>
          <button aria-label="Previous result" className="h-2">
            <svg viewBox="0 0 6 8" className="h-2 w-[6px]">
              <path d="M2.200 7.500H3.800V4H5.500L3 1L0.500 4H2.200Z" fill="#888" stroke="#444" strokeWidth="0.600" />
            </svg>
          </button>
        </div>
      </RibbonGroup>
      <RibbonGroup title="Settings" className="w-[108px]">
        <div className="flex flex-col gap-[5px] pt-2 pl-[2px]">
          <div className="flex items-center gap-[2px]">
            <Dropdown label="Settings profile" options={["default,ruchti"]} className="w-[90px] bg-[#b9b9b8]" />
            <button aria-label="Save profile">
              <svg viewBox="0 0 10 10" className="h-[10px] w-[10px]">
                <path d="M3 0H10V6H3Z" fill="#4d6cd0" />
                <path d="M5 0H8V2H5Z" fill="#fff" />
                <path d="M0 3H4V6H0ZM0 7H4V10H0ZM5 6H9V10H5Z" fill="#f3a83a" stroke="#8f4c10" strokeWidth="0.7" />
              </svg>
            </button>
          </div>
          <div className="flex gap-1 pl-[2px]">
            <button aria-label="Import settings">
              <svg viewBox="0 0 10 10" className="h-[10px] w-[10px]">
                <path d="M0 0H7V8H0Z" fill="#5d78d8" />
                <path d="M2 0H5V3H2Z" fill="#fff" />
                <circle cx="7" cy="7" r="3" fill="#39a0e6" />
                <path d="M5 7H9M7 5L9 7L7 9" stroke="#fff" fill="none" />
              </svg>
            </button>
            <button aria-label="Edit settings">
              <svg viewBox="0 0 10 10" className="h-[10px] w-[10px]">
                <path d="M0.500 0.500H8.500V7.500H0.500Z" fill="#f2f6fb" stroke="#4e7eb8" />
                <path d="M0 0H9V2H0Z" fill="#3b7fc9" />
                <circle cx="7" cy="7" r="2.200" fill="#ddd" stroke="#333" strokeWidth="1.300" />
              </svg>
            </button>
          </div>
        </div>
      </RibbonGroup>
      <RibbonGroup title="Close" className="w-[60px]">
        <BigButton label={"Close Simulation\nResults"}>
          <svg viewBox="0 0 20 20" className="h-5 w-5">
            <rect x="0.500" y="0.500" width="19" height="19" rx="1.500" fill="#c5161f" stroke="#8d4040" />
            <path d="M1 1H19V10H1Z" fill="#e25a5f" />
            <path d="M6.500 7L13.500 13M13.500 7L6.500 13" stroke="#fff" strokeWidth="2.500" />
          </svg>
        </BigButton>
      </RibbonGroup>
    </div>
  );
}

function WindowButtons() {
  return (
    <div className="flex items-center gap-[7px]">
      <button aria-label="Minimize">
        <svg viewBox="0 0 6 6" className="h-[6px] w-[6px]">
          <path d="M0.500 4.500H5.500" stroke="#eee" strokeWidth="1.500" />
        </svg>
      </button>
      <button aria-label="Restore">
        <svg viewBox="0 0 6 6" className="h-[6px] w-[6px]">
          <path d="M0.500 1.500H5.500V5H0.500Z" fill="none" stroke="#eee" />
        </svg>
      </button>
      <button aria-label="Close">
        <svg viewBox="0 0 6 6" className="h-[6px] w-[6px]">
          <path d="M1 1L5 5M5 1L1 5" stroke="#eee" strokeWidth="1.400" />
        </svg>
      </button>
    </div>
  );
}

function TitleBar() {
  return (
    <header className="relative flex h-8 shrink-0 bg-linear-to-b from-[#5f5f5f] via-[#707172] to-[#656563] text-[7px] text-gray-300">
      <button aria-label="Application menu" className="ml-1 h-[24px] w-[24px] self-center rounded-full">
        <svg viewBox="0 0 24 24">
          <circle cx="12" cy="12" r="11.500" fill="#d5d5d5" stroke="#888" />
          <circle cx="12" cy="10" r="9.500" fill="#efefef" />
          <path d="M4 9L19 9L14 19Z" fill="#2f8ad8" />
          <path d="M15 4L15 16L7 15Z" fill="#86c1ee" fillOpacity="0.8" />
          <path d="M4 9L19 9L14 19ZM15 4L15 16L7 15Z" fill="none" stroke="#fff" strokeWidth="0.8" />
          <path d="M4 9L15 16M15 4L19 12" stroke="#345" strokeWidth="0.5" />
        </svg>
      </button>
      <div className="flex flex-1 flex-col">
        <div className="flex h-[19px] items-center gap-[3px] pt-px pr-[6px] pl-[5px]">
          <button aria-label="Save">
            <FloppyIcon className="h-[10px] w-[10px]" />
          </button>
          <span className="h-[10px] w-px bg-gray-300" />
          <svg viewBox="0 0 56 10" className="h-[10px] w-[56px]" aria-hidden="true">
            <g fill="none" stroke="#8a8a88">
              <path d="M3 2V6H7M3 6Q6 1 10 4Q10 7 7 9" />
              <path d="M31 2V6H27M31 6Q28 1 24 4Q24 7 27 9" />
              <path d="M15 4H18M36 4H39" />
            </g>
            <path d="M49 3H53V4H49ZM49 5H53L51 7Z" fill="#222" />
          </svg>
          <div className="ml-auto">
            <WindowButtons />
          </div>
        </div>
        <nav className="flex h-[13px] items-stretch pl-[13px] leading-[13px]">
          <a href="#home" className="w-[33px] rounded-t-sm bg-[#bdbdbc] text-center text-[#111]">
            Home
          </a>
          <a href="#display" className="px-[9px]">
            Display
          </a>
          <a href="#color-bar" className="px-[9px]">
            Color Bar
          </a>
          <a href="#view" className="px-[7px]">
            View
          </a>
          <div className="ml-auto flex items-center gap-1 pr-1">
            <svg viewBox="0 0 36 10" className="h-[10px] w-9" aria-hidden="true">
              <path d="M1 5L6 0L10 4L5 9Z" fill="#5d50c8" stroke="#9d97df" />
              <circle cx="5" cy="4" r="1.500" fill="#f6aa3c" />
              <path d="M16 1H22L19 9H13ZM29 1H35L32 9H26Z" fill="#2f7dca" />
              <path d="M15 3.500H21M14 6H20" stroke="#173b63" strokeWidth="0.800" />
              <path d="M28 3H34M27 6H33M26 8H32" stroke="#fff" />
            </svg>
            <svg viewBox="0 0 28 6" className="h-[6px] w-[28px]" aria-hidden="true">
              <path d="M2 5H6M21 1L25 5M25 1L21 5" stroke="#ddd" strokeWidth="1.400" />
              <path d="M11 2H15V5.500H11ZM12.500 2V0.500H16.500V4H15" fill="none" stroke="#ddd" />
            </svg>
          </div>
        </nav>
      </div>
      <h1 className="pointer-events-none absolute inset-x-0 top-[4px] text-center leading-[11px] text-gray-200">
        Solid Edge ST8 - Simulation Results - [Engine Hoist.asm]
      </h1>
    </header>
  );
}

function ViewIcons() {
  return (
    <svg viewBox="0 0 132 11" className="h-[11px] w-[132px]" aria-hidden="true">
      <path d="M1 9V6Q1 3 5 3H8M6 1L9 3L6 6" fill="none" stroke="#eee" strokeWidth="1.300" />
      <rect x="15" y="1" width="9" height="9" fill="#8db6e8" />
      <circle cx="20" cy="5" r="2.500" fill="#e5f1fb" stroke="#345c94" />
      <path d="M22 7L24 10" stroke="#345c94" />
      <circle cx="31" cy="4" r="3" fill="#bfdcf5" stroke="#4879b8" />
      <path d="M33 6L37 10" stroke="#bf7b41" strokeWidth="1.500" />
      <rect x="41" y="1" width="9" height="9" fill="#e9f1fb" stroke="#4c7fc4" strokeWidth="0.800" />
      <path d="M43 3H45V5H43ZM46 3H48V5H46ZM43 6H45V8H43ZM46 6H48V8H46Z" fill="#2766bd" />
      <rect x="54" y="1" width="9" height="9" fill="#8fa3c2" />
      <path d="M55 6Q55 3 59 3T63 6L60 9H57Z" fill="#f0e6d7" />
      <path d="M67 8L69 4L74 2L75 6L72 9Z" fill="#3bd253" />
      <circle cx="71" cy="6" r="1.500" fill="#fff" />
      <path d="M80 8L85 8L89 1L84 1Z" fill="#86c2f1" />
      <path d="M80 6H84V10H80Z" fill="#2f72c0" />
      <path d="M94 8V6Q94 4 97 3M99 2H102M94 9H97" stroke="#39a5e6" strokeWidth="2" fill="none" />
      <path d="M109 1H115V6H109Z" fill="#4f9ae6" />
      <path d="M106 4H112V10H106Z" fill="#6cc845" stroke="#f1e24a" />
      <path d="M120 2H126V7H120Z" fill="#2a4f8d" />
      <path d="M124 5H129V9H124Z" fill="#eab954" stroke="#333" />
    </svg>
  );
}

function StatusBar() {
  return (
    <footer className="flex h-[13px] shrink-0 items-center bg-linear-to-b from-[#4a4a4a] to-[#2d2d2d] px-px text-[7px] text-gray-300">
      <span className="ml-[45%] h-[11px] w-px bg-gray-300" />
      <p className="pl-12">1 items are selected</p>
      <input
        aria-label="Find a command"
        defaultValue="Find a command"
        className="ml-auto h-[11px] w-[85px] bg-white px-px text-[8px] font-bold text-[#222]"
      />
      <div className="ml-[3px]">
        <ViewIcons />
      </div>
      <div className="ml-px flex h-[11px] w-[90px] items-center gap-px bg-[#64779a] px-px">
        <button aria-label="Zoom out">
          <svg viewBox="0 0 9 9" className="h-[9px] w-[9px]">
            <circle cx="4.500" cy="4.500" r="4" fill="#c4d4ec" />
            <path d="M2.500 4.500H6.500" stroke="#274170" strokeWidth="1.300" />
          </svg>
        </button>
        <input
          type="range"
          aria-label="Zoom"
          defaultValue="45"
          className="h-[9px] min-w-0 flex-1 appearance-none bg-[linear-gradient(#2d3a52,#2d3a52)] bg-size-[100%_1px] bg-center bg-no-repeat [&::-webkit-slider-thumb]:h-[8px] [&::-webkit-slider-thumb]:w-[6px] [&::-webkit-slider-thumb]:appearance-none [&::-webkit-slider-thumb]:rounded-b-full [&::-webkit-slider-thumb]:border [&::-webkit-slider-thumb]:border-[#dfe8f5] [&::-webkit-slider-thumb]:bg-[#6e8cc2]"
        />
        <button aria-label="Zoom in">
          <svg viewBox="0 0 9 9" className="h-[9px] w-[9px]">
            <circle cx="4.500" cy="4.500" r="4" fill="#c4d4ec" />
            <path d="M2.500 4.500H6.500M4.500 2.500V6.500" stroke="#274170" strokeWidth="1.300" />
          </svg>
        </button>
      </div>
      <button aria-label="Record" className="ml-[2px] h-[9px] w-[9px] rounded-full border border-[#eba5a5] bg-[#d41515]" />
      <span className="ml-[2px] h-[11px] w-px bg-gray-300" />
      <button aria-label="Upload" className="ml-[2px]">
        <svg viewBox="0 0 8 9" className="h-[9px] w-2">
          <path d="M4 0L8 4H6V6H2V4H0ZM1 7H7V9H1Z" fill="#3dd128" />
        </svg>
      </button>
      <svg viewBox="0 0 8 8" className="ml-[7px] h-2 w-2" aria-hidden="true">
        <path d="M6 1H7V2H6ZM4 3H5V4H4ZM6 3H7V4H6ZM2 5H3V6H2ZM4 5H5V6H4ZM6 5H7V6H6Z" fill="#777" />
      </svg>
    </footer>
  );
}

export default function App() {
  return (
    <div className="flex h-screen flex-col overflow-hidden bg-[#5a5a59] font-['Open_Sans','Noto_Sans',sans-serif]">
      <TitleBar />
      <Ribbon />
      <main className="flex min-h-0 flex-1 gap-[3px] px-[2px] pt-[2px]">
        <PathFinder />
        <section className="relative flex min-w-0 flex-1 justify-between overflow-hidden bg-[#fdfdfd]">
          <HoistScene />
          <div className="relative pt-[6px] pl-[10px] text-[8px] leading-[10px] font-semibold whitespace-pre text-[#179bd1]">
            <p>Engine Hoist.asm, Static Study 1, Steel - Structural:1.8901 , S460N</p>
            <p>Stress - Elemental</p>
            <p>Contour: Beam Max Comb Stress</p>
            <p>Deformation: Total Translation</p>
            <p>Date: Wednesday, January 06, 2016  3:56 PM</p>
          </div>
          <div className="relative self-start pt-[120px]">
            <StressLegend />
          </div>
        </section>
      </main>
      <StatusBar />
      <div className="h-[2px] shrink-0" />
    </div>
  );
}
